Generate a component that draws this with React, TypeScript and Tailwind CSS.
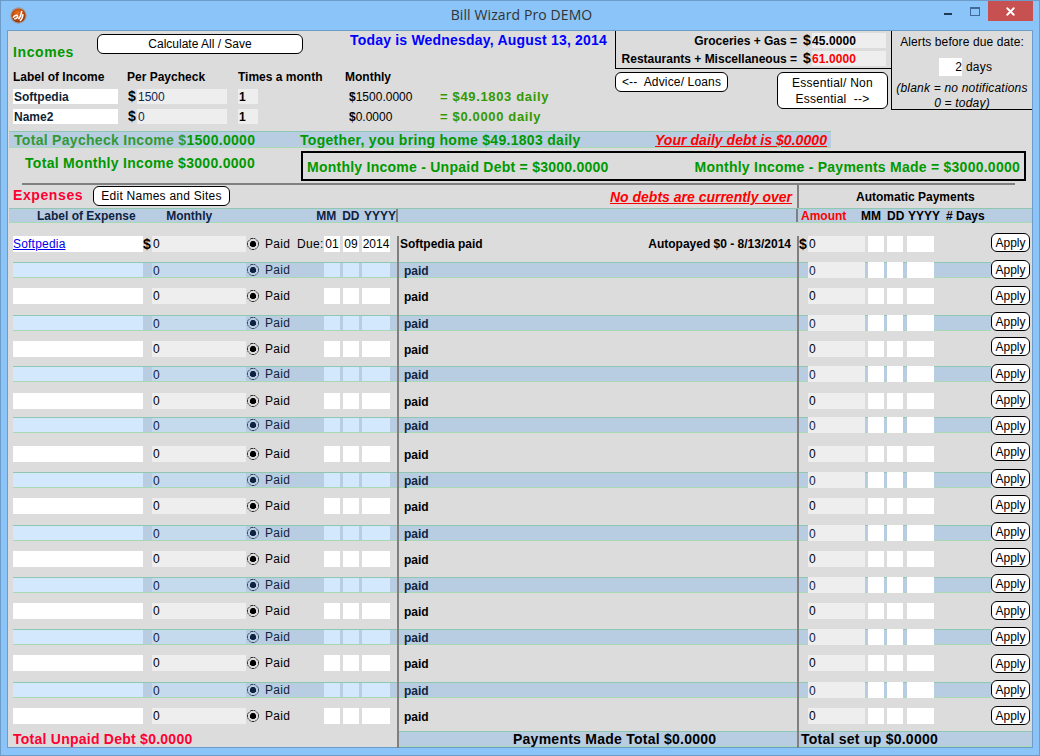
import { X } from 'lucide-react';

// top offsets of the rows are uneven in the source app, so each row has its own height
const rows = [
  { height: 'h-[26px]', apply: '-mt-[3px]' },
  { height: 'h-[26px]', apply: '-mt-[2px]' },
  { height: 'h-[27px]', apply: '-mt-[2px]' },
  { height: 'h-[26px]', apply: '-mt-[3px]' },
  { height: 'h-[25px]', apply: '-mt-[4px]' },
  { height: 'h-[27px]', apply: '-mt-[2px]' },
  { height: 'h-[24px]', apply: '-mt-[3px]' },
  { height: 'h-[29px]', apply: '-mt-[1px]' },
  { height: 'h-[26px]', apply: '-mt-[4px]' },
  { height: 'h-[26px]', apply: '-mt-[3px]' },
  { height: 'h-[27px]', apply: '-mt-[3px]' },
  { height: 'h-[26px]', apply: '-mt-[3px]' },
  { height: 'h-[26px]', apply: '-mt-[3px]' },
  { height: 'h-[26px]', apply: '-mt-[3px]' },
  { height: 'h-[26px]', apply: '-mt-[2px]' },
  { height: 'h-[26px]', apply: '-mt-[2px]' },
  { height: 'h-[27px]', apply: '-mt-[1px]' },
  { height: 'h-[26px]', apply: '-mt-[2px]' },
  { height: 'h-[23px]', apply: '-mt-[2px]' },
];

function Logo() {
  return (
    <svg width="17" height="17" viewBox="0 0 17 17">
      <defs>
        <radialGradient id="logoFill" cx="0.45" cy="0.35" r="0.7">
          <stop offset="0" stopColor="#f0701c" />
          <stop offset="1" stopColor="#8a2606" />
        </radialGradient>
      </defs>
      <circle cx="8.5" cy="8.5" r="7.7" fill="url(#logoFill)" stroke="#a0a0a0" strokeWidth="1.2" />
      <path d="M3.2 10.8c.8-2.6 3.8-3.2 4.4-1.6.5 1.5-1.8 3-3.4 2.4M8.2 11.8c1.8-.4 2.8-3.4 3.6-7.8M9.8 13.8c1.6-.6 2.8-3.4 3.2-6.6" fill="none" stroke="#fff" strokeWidth="1.5" />
    </svg>
  );
}

function RadioDot({ band }: { band: boolean }) {
  const ink = band ? '#0f2340' : '#000000';
  return (
    <svg width="12" height="12" viewBox="0 0 12 12">
      <path d="M4 .5h4L11.500 4v4L8 11.500H4L.5 8V4z" fill="none" stroke={ink} strokeWidth="0.8" strokeDasharray="2.500 0.6" />
      <path d="M4.700 3h2.600L9 4.700v2.600L7.300 9H4.700L3 7.300V4.700z" fill={ink} />
    </svg>
  );
}

function Button({ className, children }: { className: string; children: React.ReactNode }) {
  return (
    <div className={`flex shrink-0 items-center justify-center rounded-[6px] border border-black bg-white text-[12px] text-black whitespace-pre ${className}`}>
      {children}
    </div>
  );
}

function IncomeRow({ label, pay, monthly, daily, className }: { label: string; pay: string; monthly: string; daily: string; className: string }) {
  return (
    <div className={`flex h-[15px] items-center text-[12px] ${className}`}>
      <div className="ml-[5px] flex h-full w-[105px] items-center bg-white pl-px font-bold text-[#0f1f35]">{label}</div>
      <div className="ml-[10px] w-[9px] text-[14px] font-bold">$</div>
      <div className="flex h-full w-[90px] items-center bg-[#eeeeee] pl-px text-[#10284d]">{pay}</div>
      <div className="ml-[11px] flex h-full w-[20px] items-center bg-[#eeeeee] pl-[1px] font-bold">1</div>
      <div className="ml-[91px] w-[91px]">
        <span className="font-bold">$</span>
        {monthly}
      </div>
      <div className="text-[13px] font-bold tracking-[0.65px] text-[#339900]">{daily}</div>
    </div>
  );
}

function ExpenseRow({ index, height, apply }: { index: number; height: string; apply: string }) {
  const band = index % 2 === 1;
  const first = index === 0;
  const ink = band ? 'text-[#0f2340]' : 'text-black';
  const bandRow = band ? 'border-y border-t-[#8fc8b0] border-b-[#a9d8b4] bg-[#b8cde2]' : '';
  const plain = band ? 'bg-[#d3e8fc]' : 'bg-white';
  return (
    <div className={`flex ${height}`}>
      <div className="w-[391px] shrink-0 border-r-2 border-[#808080] pl-[5px]">
        <div className={`flex h-4 items-stretch text-[12px] ${ink} ${bandRow}`}>
          <div className={`flex w-[130px] items-center ${plain}`}>
            {first && <span className="tracking-[0.2px] text-[#0000ee] underline">Softpedia</span>}
          </div>
          <div className="flex w-[9px] items-center text-[14px] font-bold">{first ? '$' : ''}</div>
          <div className={`flex w-[94px] items-center pl-px ${band ? 'bg-[#c6daee] pt-[2px]' : 'bg-[#eeeeee]'}`}>0</div>
          <div className="flex w-[19px] items-center pl-px">
            <RadioDot band={band} />
          </div>
          <div className="flex w-[32px] items-center tracking-[0.3px]">Paid</div>
          <div className="flex w-[27px] items-center tracking-[0.3px]">{first ? 'Due:' : ''}</div>
          <div className={`flex w-4 items-center justify-center ${plain}`}>{first ? '01' : ''}</div>
          <div className={`ml-[3px] flex w-4 items-center justify-center ${plain}`}>{first ? '09' : ''}</div>
          <div className={`ml-[3px] flex w-[28px] items-center justify-center ${plain}`}>{first ? '2014' : ''}</div>
        </div>
      </div>
      <div className="w-[400px] shrink-0 border-r-2 border-[#808080]">
        <div className={`flex h-4 items-center justify-between text-[12px] font-bold ${ink} ${bandRow} ${first ? 'pl-px pr-[6px]' : 'pl-[5px]'}`}>
          {first ? (
            <>
              <span>Softpedia paid</span>
              <span>Autopayed $0 - 8/13/2014</span>
            </>
          ) : (
            <span className="pt-px">paid</span>
          )}
        </div>
      </div>
      <div className="flex w-[233px] shrink-0 items-start">
        <div className={`flex h-4 w-[192px] shrink-0 text-[12px] ${ink} ${bandRow}`}>
          <div className="flex w-[9px] items-center text-[14px] font-bold">{first ? '$' : ''}</div>
          <div className={`flex w-[57px] items-center bg-[#eeeeee] pl-px ${band ? '-my-px h-4 pt-[2px]' : ''}`}>0</div>
          <div className={`ml-[3px] w-4 bg-white ${band ? '-my-px h-4' : ''}`} />
          <div className={`ml-[3px] w-4 bg-white ${band ? '-my-px h-4' : ''}`} />
          <div className={`ml-[4px] w-[27px] bg-white ${band ? '-my-px h-4' : ''}`} />
        </div>
        <Button className={`h-[19px] w-[39px] ${apply}`}>Apply</Button>
      </div>
    </div>
  );
}

export default function App() {
  return (
    <div className="flex h-[756px] w-[1040px] flex-col overflow-hidden border border-[#6d9cc9] bg-[#8ac4f9] font-['Liberation_Sans',Arial,sans-serif] text-black">
      {/* title bar */}
      <div className="flex h-[29px] shrink-0 items-start">
        <div className="flex flex-1 pl-[9px] pt-[6px]">
          <Logo />
        </div>
        <div className="pt-[3px] font-['Open_Sans',sans-serif] text-[14px] tracking-[0.1px] text-[#333333]">Bill Wizard Pro DEMO</div>
        <div className="flex flex-1 items-start justify-end pr-[6px]">
          <div className="mt-[12px] h-[2px] w-2 bg-[#1f3a55]" />
          <div className="ml-[18px] mt-[6px] h-[9px] w-[10px] border border-t-2 border-[#3d6a96]" />
          <div className="ml-2 flex h-5 w-[45px] items-center justify-center bg-[#c75050]">
            <X className="h-[13px] w-[13px] text-white" strokeWidth={3.5} />
          </div>
        </div>
      </div>

      {/* client area */}
      <div className="ml-[6px] h-[718px] w-[1026px] shrink-0 border border-[#6d9cc9] bg-[#dcdcdc]">
        <div className="flex h-[100px]">
          <div className="w-[607px] shrink-0">
            <div className="flex h-[38px] items-start">
              <div className="w-[89px] pl-[5px] pt-[11px] text-[14px] font-bold tracking-[0.6px] text-[#009900]">Incomes</div>
              <Button className="mt-[3px] h-5 w-[206px]">Calculate All / Save</Button>
              <div className="ml-[47px] -mt-px text-[14px] font-bold tracking-[0.2px] text-[#0000ff]">Today is Wednesday, August 13, 2014</div>
            </div>
            <div className="flex h-[20px] items-start pl-[5px] text-[12px] font-bold">
              <div className="-mt-px w-[114px]">Label of Income</div>
              <div className="-mt-px w-[111px]">Per Paycheck</div>
              <div className="-mt-px w-[107px]">Times a month</div>
              <div className="-mt-px">Monthly</div>
            </div>
            <IncomeRow className="" label="Softpedia" pay="1500" monthly="1500.0000" daily="= $49.1803 daily" />
            <IncomeRow className="mt-[5px]" label="Name2" pay="0" monthly="0.0000" daily="= $0.0000 daily" />
          </div>

          <div className="flex w-[417px] shrink-0 items-start">
            <div className="w-[276px] shrink-0">
              <div className="h-[38px] border-b border-l border-black pt-[2px] text-[12px]">
                <div className="flex h-[15px] items-center justify-end pr-[5px]">
                  <span className="font-bold">Groceries + Gas =</span>
                  <span className="ml-[6px] w-[9px] text-[14px] font-bold">$</span>
                  <div className="flex h-full w-[74px] items-center bg-[#eeeeee] font-bold tracking-[0.1px]">45.0000</div>
                </div>
                <div className="mt-[3px] flex h-[15px] items-center justify-end pr-[5px]">
                  <span className="font-bold">Restaurants + Miscellaneous =</span>
                  <span className="ml-[6px] w-[9px] text-[14px] font-bold">$</span>
                  <div className="flex h-full w-[74px] items-center bg-[#eeeeee] font-bold tracking-[0.1px] text-[#ff0000]">61.0000</div>
                </div>
              </div>
              <div className="mt-[3px] flex items-start">
                <Button className="h-5 w-[113px] tracking-[0.15px]">{'<--  Advice/ Loans'}</Button>
                <Button className="ml-[49px] h-[37px] w-[111px] text-center leading-[16px] tracking-[0.25px]">{'Essential/ Non\nEssential  -->'}</Button>
              </div>
            </div>
            <div className="h-[79px] w-[141px] shrink-0 border-b border-l border-black text-center text-[12px]">
              <div className="mt-[2px] tracking-[0.1px]">Alerts before due date:</div>
              <div className="mt-[8px] flex h-[15px] items-center pl-[47px]">
                <div className="w-[23px] bg-white text-right">2</div>
                <div className="ml-[4px] tracking-[0.2px]">days</div>
              </div>
              <div className="mt-[7px] italic leading-[15px] tracking-[0.2px]">
                (blank = no notifications
                <br />0 = today)
              </div>
            </div>
          </div>
        </div>

        {/* income summary */}
        <div className="ml-px flex h-[17px] w-[822px] items-center border-y border-t-[#8fc8b0] border-b-[#a9d8b4] bg-[#b8cde2] pl-[5px] pt-px text-[14px] font-bold tracking-[0.3px]">
          <div className="w-[286px] text-[#339933]">
            Total Paycheck Income $<span className="text-[#009900]">1500.0000</span>
          </div>
          <div className="w-[355px] text-[#009900]">Together, you bring home $49.1803 daily</div>
          <div className="italic tracking-[0.05px] text-[#ff0000] underline">Your daily debt is $0.0000</div>
        </div>
        <div className="flex h-[35px] items-start">
          <div className="w-[293px] shrink-0 pl-[17px] pt-[5px] text-[14px] font-bold tracking-[0.3px] text-[#009900]">Total Monthly Income $3000.0000</div>
          <div className="mt-[3px] flex h-[30px] w-[725px] items-center justify-between border-2 border-black px-[4px] pt-[2px] text-[14px] font-bold tracking-[0.25px] text-[#009900]">
            <span>Monthly Income - Unpaid Debt = $3000.0000</span>
            <span>Monthly Income - Payments Made = $3000.0000</span>
          </div>
        </div>
        <div className="ml-[14px] h-[2px] w-[993px] bg-[#808080]" />

        {/* expenses heading */}
        <div className="flex h-[23px]">
          <div className="flex w-[791px] shrink-0 items-start border-r-2 border-[#808080]">
            <div className="w-[85px] pl-[5px] text-[14px] font-bold tracking-[0.6px] text-[#ff0033]">Expenses</div>
            <Button className="mt-px h-5 w-[137px] tracking-[0.25px]">Edit Names and Sites</Button>
            <div className="ml-auto pr-[5px] pt-[2px] text-[14px] font-bold italic text-[#ff0000] underline">No debts are currently over</div>
          </div>
          <div className="w-[233px] pl-[57px] pt-[3px] text-[12px] font-bold">Automatic Payments</div>
        </div>
        <div className="ml-px flex h-[15px] border-y border-t-[#8fc8b0] border-b-[#a9d8b4] bg-[#b8cde2] text-[12px] font-bold leading-[14px] text-[#0f2340]">
          <div className="w-[389px] shrink-0 border-r-2 border-[#808080]">
            <div className="flex">
              <div className="w-[158px] pl-[28px]">Label of Expense</div>
              <div className="w-[151px]">Monthly</div>
              <div className="w-[26px]">MM</div>
              <div className="w-[22px]">DD</div>
              <div>YYYY</div>
            </div>
          </div>
          <div className="w-[400px] shrink-0 border-r-2 border-[#808080]" />
          <div className="flex pl-[3px] text-black">
            <div className="w-[60px] text-[#ff0000]">Amount</div>
            <div className="w-[26px]">MM</div>
            <div className="w-[21px]">DD</div>
            <div className="w-[38px]">YYYY</div>
            <div># Days</div>
          </div>
        </div>

        {/* expense rows */}
        <div className="flex flex-col pt-[13px]">
          {rows.map((row, i) => (
            <ExpenseRow key={i} index={i} height={row.height} apply={row.apply} />
          ))}
        </div>

        {/* totals */}
        <div className="flex h-[17px] text-[14px] font-bold leading-[14px] tracking-[0.25px]">
          <div className="w-[391px] shrink-0 border-r-2 border-[#808080] pl-[5px] pt-px text-[#ff0033]">Total Unpaid Debt $0.0000</div>
          <div className="w-[400px] shrink-0 border-r-2 border-[#808080]">
            <div className="h-4 border-y border-t-[#8fc8b0] border-b-[#a9d8b4] bg-[#b8cde2] pl-[114px]">Payments Made Total $0.0000</div>
          </div>
          <div className="h-4 w-[233px] border-y border-t-[#8fc8b0] border-b-[#a9d8b4] bg-[#b8cde2] pl-[2px]">Total set up $0.0000</div>
        </div>
      </div>
    </div>
  );
}
